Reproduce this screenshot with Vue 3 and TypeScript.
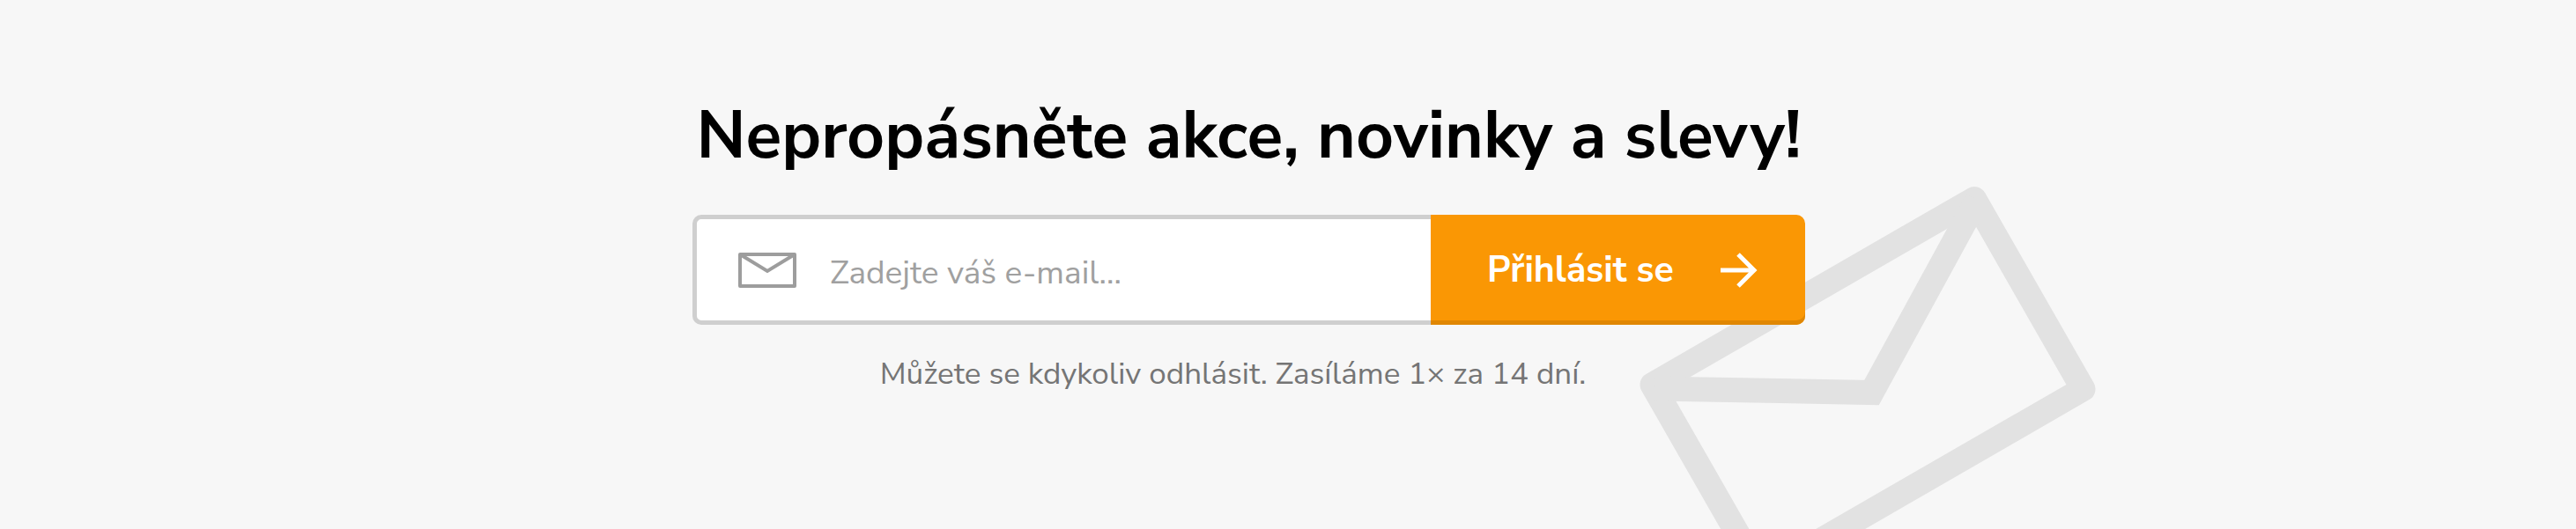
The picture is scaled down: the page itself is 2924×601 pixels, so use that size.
<script setup lang="ts">
import { ref } from 'vue'

const email = ref('')
</script>

<template>
  <section class="newsletter">
    <div class="inner">
      <svg class="backdrop" viewBox="1860 210 520 470" fill="none" aria-hidden="true">
        <path d="M1875.5 437 2241 226 2364.5 442 1999 653Z" stroke-linejoin="round" />
        <path d="M1877 441.5 2124.5 446 2244 227" />
      </svg>
      <h2 class="title">Nepropásněte akce, novinky a slevy!</h2>
      <form class="form" @submit.prevent>
        <label class="field">
          <svg class="mail" viewBox="0 0 66 40" fill="none" role="img" aria-label="E-mail">
            <path d="M2 2H64V38H2Z" stroke-linejoin="round" />
            <path d="M2 2 33 21 64 2" />
          </svg>
          <input v-model="email" class="input" type="email" placeholder="Zadejte váš e-mail..." />
        </label>
        <button class="submit" type="submit">
          <span>Přihlásit se</span>
          <svg class="arrow" viewBox="0 0 42 40" fill="none" aria-hidden="true">
            <path d="M0 20H38M20 2 38 20 20 38" />
          </svg>
        </button>
      </form>
      <p class="note">Můžete se kdykoliv odhlásit. Zasíláme 1× za 14 dní.</p>
    </div>
  </section>
</template>

<style>
body {
  margin: 0;
  background: #f7f7f7;
}
</style>

<style scoped>
.newsletter {
  box-sizing: border-box;
  min-height: 100vh;
  padding: 106px 24px 0;
  overflow: hidden;
  background: #f7f7f7;
  font-family: "Nunito Sans", Nunito, Lato, "Open Sans", sans-serif;
}
.inner {
  position: relative;
  box-sizing: border-box;
  max-width: 1352px;
  margin: 0 auto;
  padding-right: 89px;
}
.backdrop {
  position: absolute;
  top: 104px;
  right: -242px;
  width: 520px;
  height: 470px;
  stroke: #e2e2e2;
  stroke-width: 28;
}
.title {
  position: relative;
  margin: 0 0 42px;
  color: #000;
  font-size: 75px;
  line-height: 96px;
  font-weight: 680;
  text-align: center;
}
.form {
  position: relative;
  display: flex;
  height: 125px;
}
.field {
  box-sizing: border-box;
  flex: 1;
  min-width: 0;
  display: flex;
  align-items: center;
  gap: 38px;
  padding-left: 47px;
  border: 5px solid #cfcfcf;
  border-right: 0;
  border-radius: 10px 0 0 10px;
  background: #fff;
}
.mail {
  flex: none;
  width: 66px;
  height: 40px;
  stroke: #9d9d9d;
  stroke-width: 4;
}
.input {
  box-sizing: border-box;
  flex: 1;
  min-width: 0;
  height: 100%;
  padding: 6px 0 0;
  border: 0;
  outline: 0;
  background: transparent;
  color: #333;
  font: inherit;
  font-size: 37px;
}
.input::placeholder {
  color: #a0a0a0;
  opacity: 1;
}
.submit {
  flex: none;
  display: flex;
  align-items: center;
  justify-content: space-between;
  box-sizing: border-box;
  width: 425px;
  padding: 0 54px 0 64px;
  border: 0;
  border-radius: 0 10px 10px 0;
  background: #fa9704;
  box-shadow: inset 0 -5px 0 #e08703;
  color: #fff;
  font: inherit;
  font-size: 41px;
  font-weight: 700;
  cursor: pointer;
}
.arrow {
  width: 42px;
  height: 40px;
  stroke: #fff;
  stroke-width: 5;
}
.note {
  position: relative;
  margin: 32px 36px 0 0;
  color: #757575;
  font-size: 35px;
  line-height: 48px;
  text-align: center;
}
</style>
